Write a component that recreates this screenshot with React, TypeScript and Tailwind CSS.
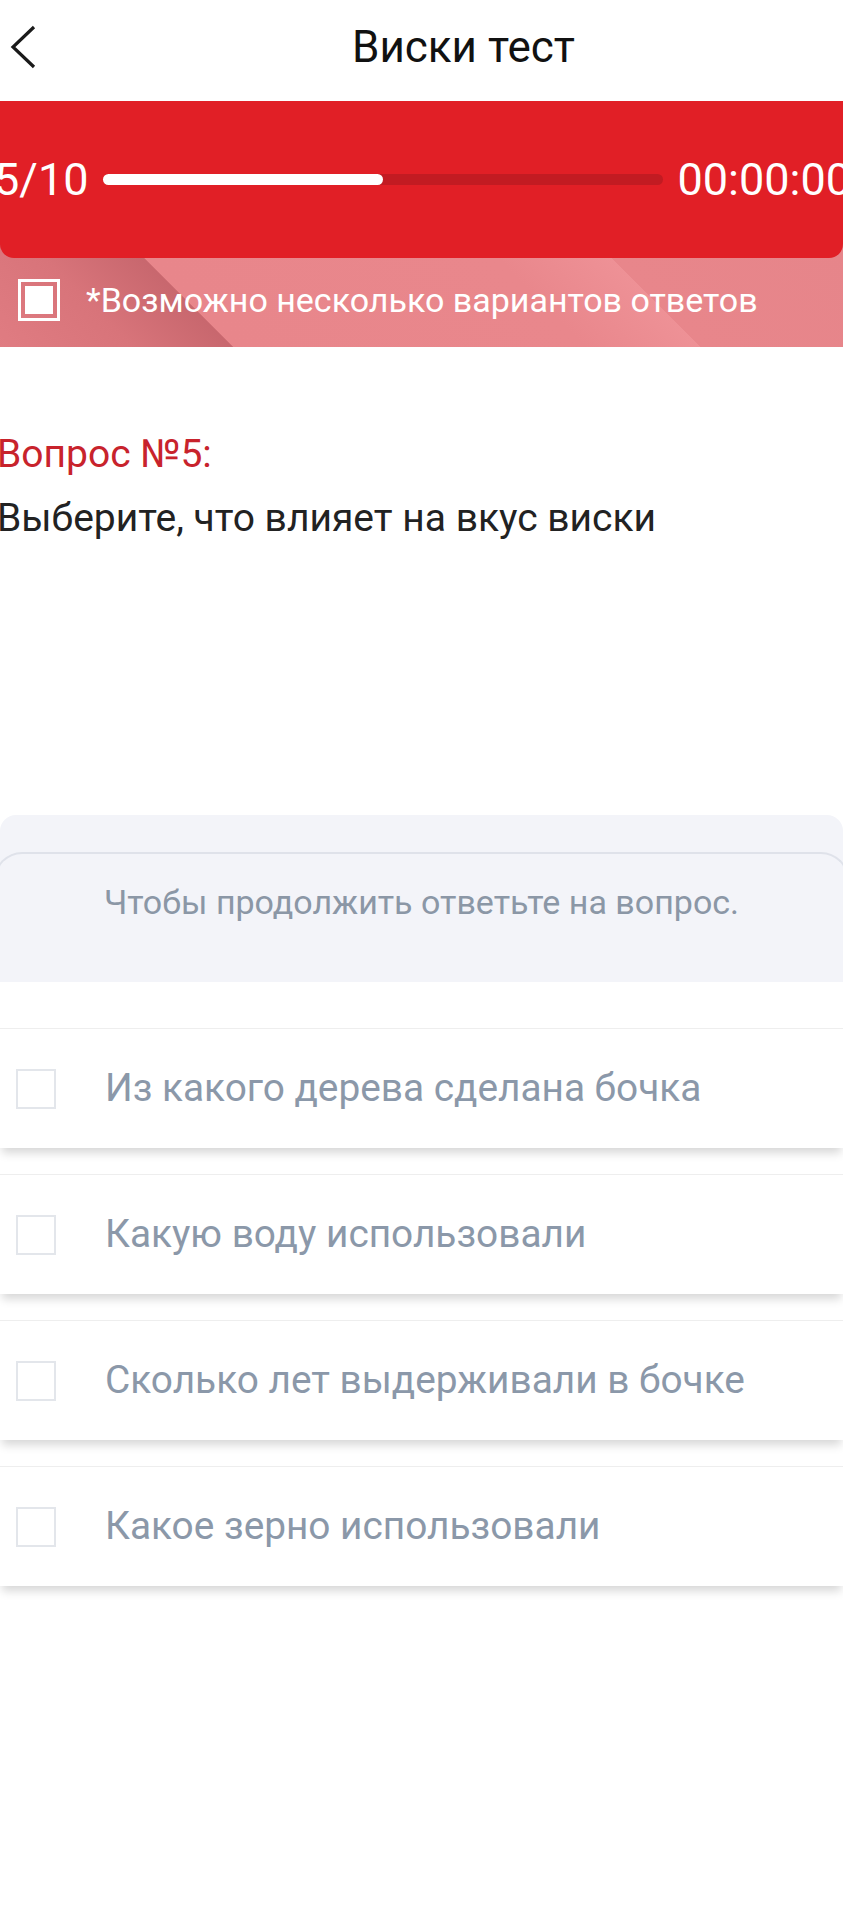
import { useState } from "react";

const options = [
  "Из какого дерева сделана бочка",
  "Какую воду использовали",
  "Сколько лет выдерживали в бочке",
  "Какое зерно использовали",
];

const OptionCard = ({ label }: { label: string }) => {
  const [checked, setChecked] = useState(false);
  return (
    <button
      onClick={() => setChecked(!checked)}
      className="flex h-[120px] w-full items-center border-t border-[#eeeeee] bg-white text-left shadow-[0_7px_9px_-2px_rgba(0,0,0,0.16)]"
    >
      <span
        className={`ml-4 h-10 w-10 shrink-0 border-2 ${
          checked ? "border-[#e11f26] bg-[#e11f26]" : "border-[#e3e6eb]"
        }`}
      />
      <span className="ml-[49px] text-[38.8px] text-[#8b98a9]">{label}</span>
    </button>
  );
};

export default function App() {
  const done = 5;
  const total = 10;

  return (
    <div className="min-h-[1920px] w-[843px] overflow-hidden bg-white font-['Roboto',sans-serif]">
      {/* Header */}
      <header className="flex h-[101px] items-center">
        <svg
          width="26"
          height="44"
          viewBox="0 0 26 44"
          className="ml-[10px] -mt-[8px]"
          fill="none"
          stroke="#1a1a1a"
          strokeWidth="3.2"
        >
          <path d="M24 2 L3 22 L24 42" />
        </svg>
        <h1 className="ml-[316px] -mt-[8px] text-[44px] leading-none text-[#111111]">
          Виски тест
        </h1>
      </header>

      {/* Progress */}
      <div className="relative z-10 flex h-[157px] items-center rounded-b-[14px] bg-[#e11f26] text-white">
        <span className="-ml-[6px] text-[45px] leading-none">
          {done}/{total}
        </span>
        <div className="ml-[15px] h-[11px] w-[560px] shrink-0 rounded-full bg-[#c21b22]">
          <div
            className="h-full rounded-full bg-white"
            style={{ width: `${(done / total) * 100}%` }}
          />
        </div>
        <span className="ml-[14px] whitespace-nowrap text-[45px] leading-none">
          00:00:00
        </span>
      </div>

      {/* Hint strip */}
      <div className="-mt-[14px] flex h-[103px] items-center bg-[linear-gradient(45deg,#e07c82_0%,#d8747a_14%,#c8676e_24.6%,#e8868b_24.7%,#e9878c_62%,#ee9196_74%,#e8868b_74.1%,#e6858a_100%)] pt-[14px] pb-[6px]">
        <span className="ml-[18px] flex h-[42px] w-[42px] items-center justify-center border-[3px] border-white">
          <span className="h-[28px] w-[28px] bg-white" />
        </span>
        <span className="ml-[26px] text-[34px] leading-none text-white">
          *Возможно несколько вариантов ответов
        </span>
      </div>

      {/* Question */}
      <div className="-ml-[3px] pt-[85px]">
        <p className="text-[39px] leading-[44px] text-[#c8232c]">Вопрос №5:</p>
        <p className="mt-[20px] text-[39px] leading-[44px] text-[#222222]">
          Выберите, что влияет на вкус виски
        </p>
      </div>

      {/* Notice */}
      <div className="mt-[275px] h-[167px] rounded-t-2xl bg-[#f3f4f9] pt-[37px]">
        <div className="-mx-[6px] flex h-[130px] justify-center rounded-t-[28px] border-x-2 border-t-2 border-[#dfe2ea] pt-[31px]">
          <span className="text-[34px] leading-none text-[#8b97a6]">
            Чтобы продолжить ответьте на вопрос.
          </span>
        </div>
      </div>

      {/* Options */}
      <div className="mt-[46px] flex flex-col gap-[26px]">
        {options.map((o) => (
          <OptionCard key={o} label={o} />
        ))}
      </div>
    </div>
  );
}
